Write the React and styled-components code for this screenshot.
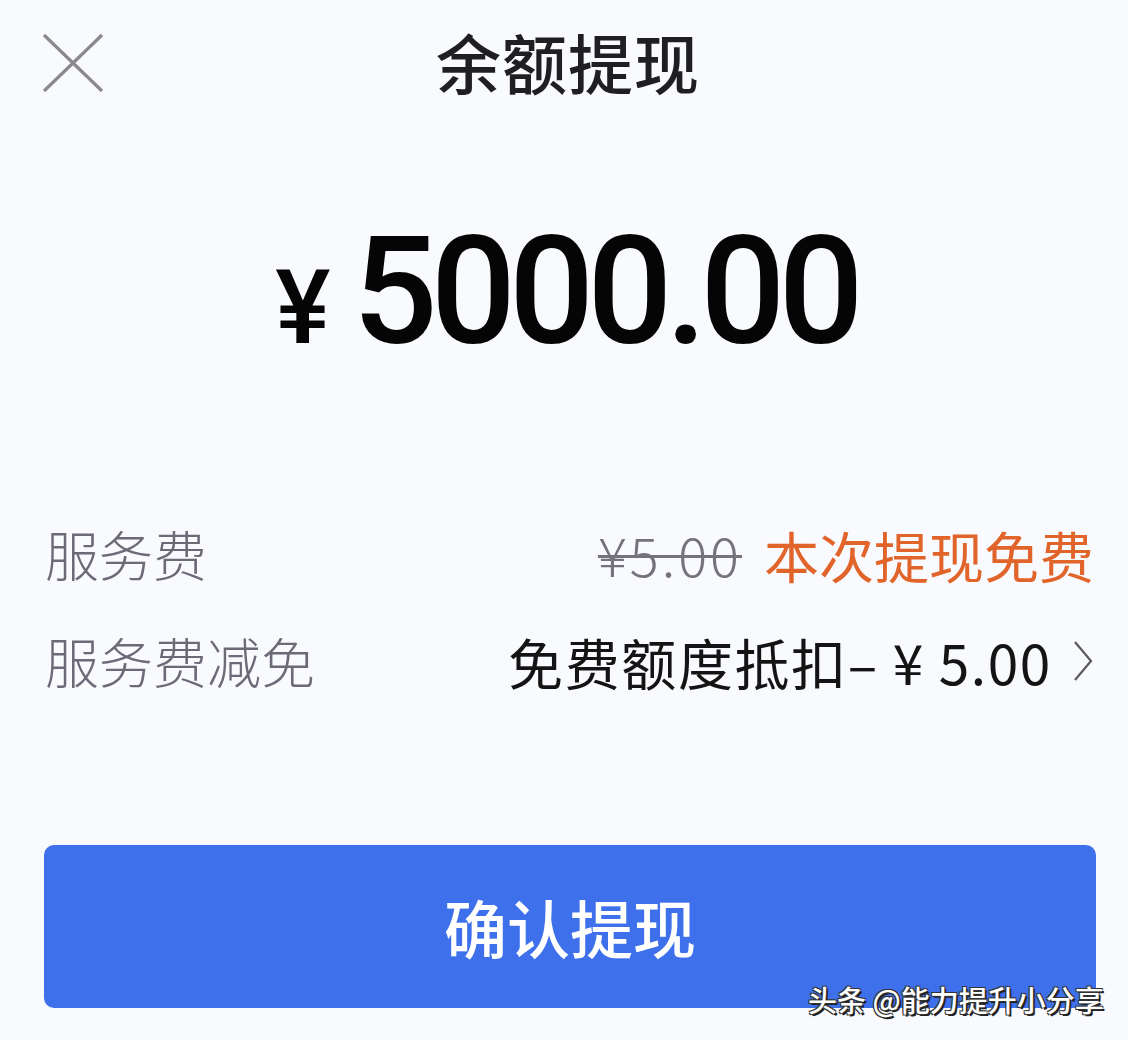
import React from "react";
import styled, { createGlobalStyle } from "styled-components";

const Global = createGlobalStyle`
  html, body { margin: 0; padding: 0; background: #f9fafd; }
  body { font-family: "Noto Sans CJK SC", "Noto Sans", sans-serif; }
`;

const Page = styled.div`
  position: relative;
  width: 1128px;
  height: 1040px;
  background: #f9fafd;
  display: flex;
  flex-direction: column;
  box-sizing: border-box;
  overflow: hidden;
`;

const Header = styled.header`
  display: flex;
  align-items: center;
  justify-content: center;
  height: 122px;
  position: relative;
  padding-left: 8px;
`;

const Close = styled.button`
  position: absolute;
  left: 40px;
  top: 32px;
  width: 66px;
  height: 62px;
  padding: 0;
  border: 0;
  background: none;
  display: flex;
  align-items: center;
  justify-content: center;
`;

const Title = styled.h1`
  margin: 0;
  font-size: 65px;
  font-weight: 500;
  color: #1f1f22;
  letter-spacing: 1px;
`;

const AmountBox = styled.div`
  display: flex;
  align-items: baseline;
  justify-content: center;
  padding-top: 95px;
  height: 378px;
  box-sizing: border-box;
  font-family: Roboto, "Noto Sans", sans-serif;
  font-weight: 500;
  color: #050505;
  padding-left: 4px;
`;

const Yen = styled.span`
  font-size: 104px;
  margin-right: 22px;
`;

const Digits = styled.span`
  font-size: 150px;
  letter-spacing: -7px;
  line-height: 1;
`;

const Rows = styled.div`
  display: flex;
  flex-direction: column;
  padding: 0 34px 0 45px;
`;

const Row = styled.div`
  display: flex;
  justify-content: space-between;
  align-items: center;
  height: 107px;
  font-size: 55px;
`;

const Label = styled.span`
  color: #6d6a78;
  font-weight: 300;
  font-size: 54px;
`;

const Right = styled.span`
  display: flex;
  align-items: center;
  gap: 22px;
`;

const Struck = styled.span`
  color: #75727c;
  font-weight: 300;
  text-decoration: line-through;
  text-decoration-thickness: 3px;
  font-size: 54px;
  letter-spacing: 3px;
`;

const Orange = styled.span`
  color: #e1652a;
  font-weight: 400;
`;

const Value = styled.span`
  color: #141414;
  font-weight: 400;
  letter-spacing: 1.6px;
`;

const Chevron = styled.svg`
  width: 22px;
  height: 44px;
  margin-left: -2px;
`;

const Spacer = styled.div`
  height: 131px;
`;

const Button = styled.button`
  margin: 0 32px 0 44px;
  height: 163px;
  border: 0;
  border-radius: 10px;
  background: #3d70ea;
  color: #fff;
  font-family: "Noto Sans CJK SC", sans-serif;
  font-size: 63px;
  font-weight: 500;
  letter-spacing: 0;
  padding-bottom: 4px;
`;

const Watermark = styled.div`
  position: absolute;
  left: 808px;
  top: 978px;
  font-size: 29px;
  color: #fff;
  font-family: "Noto Sans CJK SC", sans-serif;
  font-weight: 500;
  letter-spacing: 0;
  text-shadow: -1px -1px 0 #333, 1px -1px 0 #333, -1px 1px 0 #333, 2px 2px 0 #222;
  white-space: nowrap;
`;

export default function App() {
  return (
    <Page>
      <Global />
      <Header>
        <Close aria-label="关闭">
          <svg width="64" height="60" viewBox="0 0 64 60">
            <path d="M3 2 L61 58 M61 2 L3 58" stroke="#8a8a8c" strokeWidth="3.2" fill="none" />
          </svg>
        </Close>
        <Title>余额提现</Title>
      </Header>
      <AmountBox>
        <Yen>¥</Yen>
        <Digits>5000.00</Digits>
      </AmountBox>
      <Rows>
        <Row>
          <Label>服务费</Label>
          <Right>
            <Struck>¥5.00</Struck>
            <Orange>本次提现免费</Orange>
          </Right>
        </Row>
        <Row>
          <Label>服务费减免</Label>
          <Right>
            <Value>免费额度抵扣– ¥ 5.00</Value>
            <Chevron viewBox="0 0 22 44">
              <path d="M3 3 L19 22 L3 41" stroke="#5a5a5e" strokeWidth="2.2" fill="none" />
            </Chevron>
          </Right>
        </Row>
      </Rows>
      <Spacer />
      <Button>确认提现</Button>
      <Watermark>头条 @能力提升小分享</Watermark>
    </Page>
  );
}
